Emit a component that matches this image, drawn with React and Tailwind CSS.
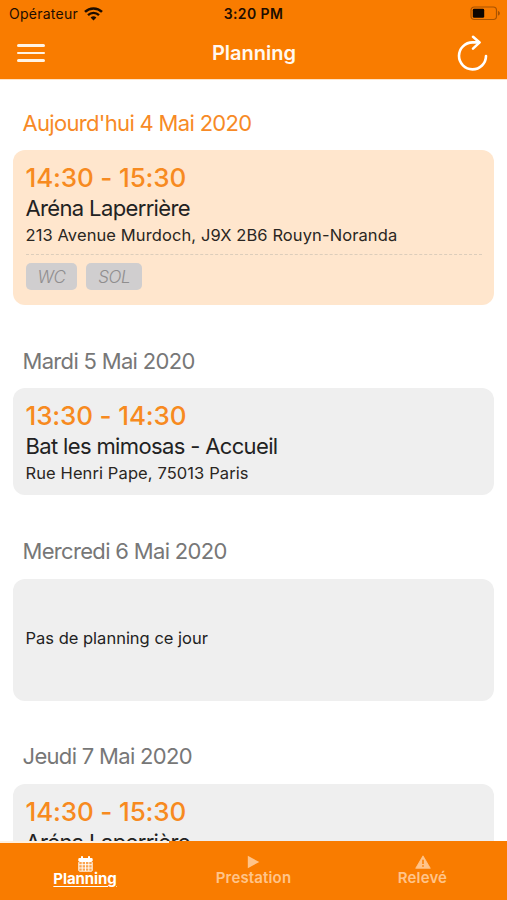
import React from "react";
import clsx from "clsx";

const days = [
  {
    label: "Aujourd'hui 4 Mai 2020",
    today: true,
    time: "14:30 - 15:30",
    place: "Aréna Laperrière",
    address: "213 Avenue Murdoch, J9X 2B6 Rouyn-Noranda",
    tags: ["WC", "SOL"],
    cardClass: "h-[155px]",
  },
  {
    label: "Mardi 5 Mai 2020",
    time: "13:30 - 14:30",
    place: "Bat les mimosas - Accueil",
    address: "Rue Henri Pape, 75013 Paris",
    cardClass: "h-[107px]",
  },
  {
    label: "Mercredi 6 Mai 2020",
    cardClass: "h-[122px]",
  },
  {
    label: "Jeudi 7 Mai 2020",
    time: "14:30 - 15:30",
    place: "Aréna Laperrière",
    address: "213 Avenue Murdoch, J9X 2B6 Rouyn-Noranda",
    cardClass: "h-[155px]",
  },
];

function WifiIcon() {
  return (
    <svg width="19" height="14" viewBox="0 0 19 14" fill="none" stroke="#1d0d00">
      <path d="M1 4.9a12.2 12.2 0 0 1 17 0" strokeWidth="2.5" />
      <path d="M4 8.1a7.8 7.8 0 0 1 11 0" strokeWidth="2.3" />
      <path d="M6.6 10.6a4.2 4.2 0 0 1 5.8 0L9.5 13.6z" fill="#1d0d00" stroke="none" />
    </svg>
  );
}

function BatteryIcon() {
  return (
    <svg width="31" height="15" viewBox="0 0 31 15" fill="none">
      <rect x="1" y="1" width="25.5" height="12.5" rx="3.2" stroke="#a95300" strokeWidth="1.2" />
      <rect x="2.8" y="2.8" width="11.4" height="9" rx="1.4" fill="#0d0500" />
      <path d="M28 5v4.6c1.2-.4 1.9-1.2 1.9-2.3S29.2 5.4 28 5z" fill="#a95300" />
    </svg>
  );
}

function RefreshIcon() {
  return (
    <svg
      width="32"
      height="38"
      viewBox="0 0 32 38"
      fill="none"
      stroke="#fff"
      strokeWidth="2.6"
      strokeLinecap="round"
      strokeLinejoin="round"
    >
      <path d="M30 22A13.5 13.5 0 1 1 16.5 8.4H23" />
      <path d="M17 2.8 23.6 8.4 17 14.6" />
    </svg>
  );
}

function CalendarIcon() {
  return (
    <svg width="15" height="16" viewBox="0 0 15 16" fill="#fff">
      <path d="M1.5 2h12A1.2 1.2 0 0 1 14.7 3.2V5H.3V3.2A1.2 1.2 0 0 1 1.5 2z" />
      <rect x="3" y="0" width="2" height="3.5" rx="0.8" />
      <rect x="10" y="0" width="2" height="3.5" rx="0.8" />
      <rect x="0.8" y="5.5" width="13.4" height="9.7" rx="0.8" fill="none" stroke="#fff" />
      <path d="M4.2 5.5v9.5M7.5 5.5v9.5M10.8 5.5v9.5M1 8.7h13M1 12h13" stroke="#fff" strokeWidth="0.9" />
      <path d="M1 5.5h13v9.5H1z" opacity="0.3" />
    </svg>
  );
}

function PlayIcon() {
  return (
    <svg width="13" height="14" viewBox="0 0 13 14" fill="#ffc48a">
      <path d="M.8.8 12.3 7 .8 13.2z" />
    </svg>
  );
}

function WarningIcon() {
  return (
    <svg width="16" height="14" viewBox="0 0 16 14">
      <path d="M8 .8 15.3 13.3H.7z" fill="#ffc48a" stroke="#ffc48a" strokeWidth="0.8" strokeLinejoin="round" />
      <path d="M8 4.8v4.2M8 10.3v1.5" stroke="#f97c00" strokeWidth="1.5" />
    </svg>
  );
}

function Header() {
  return (
    <header className="h-20 shrink-0 border-b border-[#ffe3c6] bg-[#f97c00]">
      <div className="grid h-[27px] grid-cols-3 items-center pl-[8px] pr-[6px] text-[14px] text-[#1d0d00]">
        <div className="flex items-center gap-[6px] pl-px">
          <span className="tracking-[0.25px]">Opérateur</span>
          <WifiIcon />
        </div>
        <span className="pr-[2px] text-center text-[14px] font-semibold tracking-[0.4px]">3:20 PM</span>
        <div className="flex justify-end">
          <BatteryIcon />
        </div>
      </div>
      <div className="grid h-[52px] grid-cols-3 items-center pl-[17px] pr-[19px]">
        <button type="button" className="flex w-[28px] flex-col gap-[5px]">
          <span className="h-[2.5px] rounded-full bg-[#fff4e6]"></span>
          <span className="h-[2.5px] rounded-full bg-[#fff4e6]"></span>
          <span className="h-[2.5px] rounded-full bg-[#fff4e6]"></span>
        </button>
        <h1 className="pl-[3px] text-center text-[20px] font-semibold text-[#fff8f0]">Planning</h1>
        <button type="button" className="flex justify-end">
          <RefreshIcon />
        </button>
      </div>
    </header>
  );
}

function DayCard({ day }) {
  return (
    <section className="mb-[28.3px]">
      <h2
        className={clsx(
          "flex h-[55px] items-center pt-px pl-[9.5px] text-[22px] tracking-[-0.68px]",
          day.today ? "text-[#f78a26]" : "text-[#777777]"
        )}
      >
        {day.label}
      </h2>
      <div
        className={clsx(
          "rounded-[12px] px-[12.5px]",
          day.cardClass,
          day.today ? "bg-[#ffe6cd]" : "bg-[#efefef]"
        )}
      >
        {day.time ? (
          <>
            <p className="pt-[11px] text-[26px] leading-[33px] font-medium tracking-[-0.15px] text-[#f78a20]">
              {day.time}
            </p>
            <p className="text-[22px] leading-[29px] tracking-[-0.64px] text-[#222222]">{day.place}</p>
            <p className="text-[16.5px] leading-[24px] tracking-[0.1px] text-[#2a2622]">{day.address}</p>
          </>
        ) : (
          <p className="flex h-[120px] items-center text-[16.5px] text-[#222222]">Pas de planning ce jour</p>
        )}
        {day.tags && (
          <div className="mt-[7px] flex gap-[9px] border-t border-dashed border-[#dccdbb] pt-[8px]">
            {day.tags.map((tag) => (
              <span
                key={tag}
                className="flex h-[27px] items-center rounded-[5px] bg-[#d0cecf] px-[12px] pt-[2px] text-[17px] font-light tracking-[-0.5px] text-[#8f8d8e] italic"
              >
                {tag}
              </span>
            ))}
          </div>
        )}
      </div>
    </section>
  );
}

function TabBar() {
  return (
    <nav className="grid h-[59px] shrink-0 grid-cols-3 bg-[#f97c00] text-[15px] font-semibold tracking-[0.15px] text-[#ffc48a]">
      <button
        type="button"
        className="flex flex-col items-center border-t-2 border-[#fff0e0] pt-[13px] pl-px font-bold tracking-[-0.1px] text-white"
      >
        <CalendarIcon />
        <span className="-mt-[2px] leading-[18px] underline underline-offset-2">Planning</span>
      </button>
      <button type="button" className="flex flex-col items-center pt-[14px]">
        <PlayIcon />
        <span className="leading-[18px]">Prestation</span>
      </button>
      <button type="button" className="flex flex-col items-center pt-[14px]">
        <WarningIcon />
        <span className="leading-[18px]">Relevé</span>
      </button>
    </nav>
  );
}

export default function App() {
  return (
    <div className="flex h-screen w-full flex-col overflow-hidden bg-white font-['Inter',sans-serif]">
      <Header />
      <main className="min-h-0 flex-1 overflow-hidden px-[13px] pt-[15px]">
        {days.map((day) => (
          <DayCard key={day.label} day={day} />
        ))}
      </main>
      <TabBar />
    </div>
  );
}
